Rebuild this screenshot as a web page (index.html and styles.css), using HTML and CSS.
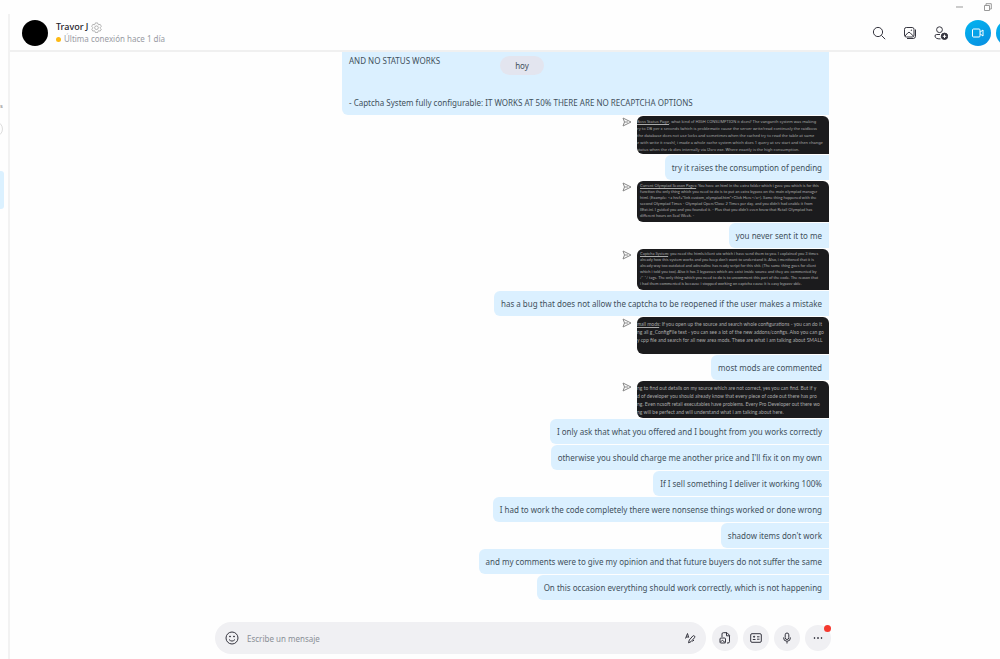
FILE: index.html
```html
<!DOCTYPE html>
<html lang="es">

<head>
    <title>Travor J</title>
    <meta charset="utf-8">
    <link rel="stylesheet" href="styles.css">
</head>

<body>
    <div class="window-bar">
        <button class="window-button" aria-label="Minimizar">
            <svg width="8" height="8" viewBox="0 0 8 8"><path d="M1 4h7" /></svg>
        </button>
        <button class="window-button" aria-label="Restaurar">
            <svg width="8" height="8" viewBox="0 0 8 8"><path d="M.5 2.500h5v5h-5zM2 2.500V.7h5.300V6H5.500" /></svg>
        </button>
    </div>

    <div class="app">
        <aside class="sidebar">
            <span class="sidebar-tab">s</span>
            <span class="sidebar-round"></span>
            <span class="sidebar-active"></span>
        </aside>

        <main class="chat">
            <header class="chat-header">
                <div class="avatar"></div>
                <div class="contact">
                    <div class="contact-name">Travor J
                        <svg width="11" height="11" viewBox="0 0 24 24"><path d="M9.500 2h5l.8 3 1.700 1 3-.9 2.500 4.300-2.200 2.200v1.800l2.200 2.200-2.500 4.300-3-.9-1.700 1-.8 3h-5l-.8-3-1.700-1-3 .9L1.500 15.600l2.200-2.200v-1.800L1.500 9.400 4 5.100l3 .9 1.700-1z" /><circle cx="12" cy="12.500" r="4" /></svg>
                    </div>
                    <div class="contact-status"><i class="dot"></i>Última conexión hace 1 día</div>
                </div>
                <nav class="actions">
                    <button class="action" aria-label="Buscar">
                        <svg width="14" height="14" viewBox="0 0 14 14"><circle cx="6" cy="6" r="4.600" /><path d="M9.400 9.400l3.800 3.800" /></svg>
                    </button>
                    <button class="action" aria-label="Galería">
                        <svg width="14" height="14" viewBox="0 0 14 14"><rect x="1.500" y="1.500" width="9.500" height="9.500" rx="1.800" /><path d="M2 10l3-3.300q1-.9 2 0l3.500 3.500M12.500 3.500v6.700q0 2.300-2.300 2.300H4" /><circle cx="8.300" cy="4.200" r=".3" /></svg>
                    </button>
                    <button class="action" aria-label="Agregar personas">
                        <svg width="14" height="14" viewBox="0 0 14 14"><circle cx="5.500" cy="3.700" r="2.900" /><path d="M6 8.500H2.700Q1 8.500 1 10q0 3 5.500 2.900" /><circle class="fill" cx="10.500" cy="10.300" r="3.200" /><path class="plus" d="M8.800 10.300h3.400M10.500 8.600V12" /></svg>
                    </button>
                    <button class="call" aria-label="Videollamada">
                        <svg width="14" height="14" viewBox="0 0 14 14"><rect x="1.500" y="3" width="7.500" height="8" rx="1" /><path d="M9 6.200l3-2.200v6L9 7.800" /></svg>
                    </button>
                    <button class="call" aria-label="Llamada"></button>
                </nav>
            </header>

            <section class="messages">
                <span class="day">hoy</span>
                <p class="bubble bubble-long">- Boss Status Page fully configurable: The page is not working with any options<br>AND NO STATUS WORKS<br><br><br>- Captcha System fully configurable: IT WORKS AT 50% THERE ARE NO RECAPTCHA OPTIONS</p>

                <div class="shot-row">
                    <button class="forward" aria-label="Reenviar"><svg width="10" height="10" viewBox="0 0 10 10"><path d="M1 1l8 4-8 4 1.500-4zM2.500 5H6" /></svg></button>
                    <div class="shot"><u>Boss Status Page</u>, what kind of HIGH CONSUMPTION it does? The vanganth system was making<br>ry to DB per x seconds (which is problematic cause the server write/read continusly the raidboss<br>the database does not use locks and sometimes when the cached try to read the table at same<br>e with write it crash), i made a whole cache system which does 1 query at srv start and then change<br>status when the rb dies internally via l2srv exe. Where exactly is the high consumption.</div>
                </div>
                <p class="bubble">try it raises the consumption of pending</p>

                <div class="shot-row">
                    <button class="forward" aria-label="Reenviar"><svg width="10" height="10" viewBox="0 0 10 10"><path d="M1 1l8 4-8 4 1.500-4zM2.500 5H6" /></svg></button>
                    <div class="shot shot-dense"><u>Current Olympiad Season Pages</u>: You have an html in the extra folder which i gave you which is for this<br>function the only thing which you need to do is to put an extra bypass on the main olympiad manager<br>html. (Example: &lt;a href="link custom_olympiad.htm"&gt;Click Here&lt;/a&gt;). Same thing happened with the<br>second Olympiad Times - Olympiad Open/Close 2 Times per day, and you didn't had enable it from<br>IlExt.ini. I guided you and you founded it. - Plus that you didn't even knew that Retail Olympiad has<br>different hours on Seal Week. -</div>
                </div>
                <p class="bubble">you never sent it to me</p>

                <div class="shot-row">
                    <button class="forward" aria-label="Reenviar"><svg width="10" height="10" viewBox="0 0 10 10"><path d="M1 1l8 4-8 4 1.500-4zM2.500 5H6" /></svg></button>
                    <div class="shot shot-dense"><u>Captcha System</u>: you need the htmls/client utx which i have send them to you. I explained you 3 times<br>already how this system works and you keep don't want to understand it. Also, i mentioned that it is<br>already way too outdated and adrenaline has ready script for this shit. (The same thing goes for client<br>which i told you too). Also it has 3 bypasses which are exist inside source and they are commented by<br>/* */ tags. The only thing which you need to do is to uncomment this part of the code. The reason that<br>i had them commented is because i stopped working on captcha cause it is easy bypass-able.</div>
                </div>
                <p class="bubble">has a bug that does not allow the captcha to be reopened if the user makes a mistake</p>

                <div class="shot-row">
                    <button class="forward" aria-label="Reenviar"><svg width="10" height="10" viewBox="0 0 10 10"><path d="M1 1l8 4-8 4 1.500-4zM2.500 5H6" /></svg></button>
                    <div class="shot shot-large"><u>mall mods</u>: If you open up the source and search whole configurations - you can do it<br>ng all g_ConfigFile text - you can see a lot of the new addons/configs. Also you can go<br>y cpp file and search for all new area mods. These are what i am talking about SMALL<br>&nbsp;</div>
                </div>
                <p class="bubble">most mods are commented</p>

                <div class="shot-row">
                    <button class="forward" aria-label="Reenviar"><svg width="10" height="10" viewBox="0 0 10 10"><path d="M1 1l8 4-8 4 1.500-4zM2.500 5H6" /></svg></button>
                    <div class="shot shot-large">ng to find out details on my source which are not correct, yes you can find. But if y<br>d of developer you should already know that every piece of code out there has pro<br>ng. Even ncsoft retail executables have problems. Every Pro Developer out there wo<br>ng will be perfect and will understand what i am talking about here.</div>
                </div>
                <p class="bubble">I only ask that what you offered and I bought from you works correctly</p>
                <p class="bubble">otherwise you should charge me another price and I'll fix it on my own</p>
                <p class="bubble">If I sell something I deliver it working 100%</p>
                <p class="bubble">I had to work the code completely there were nonsense things worked or done wrong</p>
                <p class="bubble">shadow items don't work</p>
                <p class="bubble">and my comments were to give my opinion and that future buyers do not suffer the same</p>
                <p class="bubble">On this occasion everything should work correctly, which is not happening</p>
            </section>

            <footer class="composer">
                <div class="input-box">
                    <button class="tool" aria-label="Emoticonos">
                        <svg width="14" height="14" viewBox="0 0 14 14"><circle cx="7" cy="7" r="6" /><path d="M4 8.500q3 3.200 6 0" /><circle class="fill" cx="5" cy="5.500" r=".5" /><circle class="fill" cx="9" cy="5.500" r=".5" /></svg>
                    </button>
                    <input class="message-input" type="text" placeholder="Escribe un mensaje" aria-label="Escribe un mensaje">
                    <button class="tool" aria-label="Formato">
                        <svg width="12" height="12" viewBox="0 0 12 12"><path d="M1.500 6.500l2-5 1.200 4M2 5h2.500M4.500 10.800l.8-2.800 3.500-4q1-.8 1.700 0t0 1.700l-3.500 4zM8.500 9.500l1.500-1.500" /></svg>
                    </button>
                </div>
                <button class="round" aria-label="Archivos">
                    <svg width="12" height="12" viewBox="0 0 12 12"><path d="M3 5V2q0-1.300 1.300-1.300H8L10.500 3.300v6.400Q10.500 11 9 11H8M7.500.8v3h3" /><rect x="1" y="6" width="5.500" height="5" rx="1" /><path d="M1.300 10.200l2-2 3 2.500" /></svg>
                </button>
                <button class="round" aria-label="Contactos">
                    <svg width="12" height="12" viewBox="0 0 12 12"><rect x=".7" y="1.700" width="10.600" height="8.600" rx="1.300" /><path d="M7 4.800h2.500M7 7.200h2.500M2.800 7.500h2.700" /><circle class="fill" cx="4.100" cy="4.700" r=".6" /></svg>
                </button>
                <button class="round" aria-label="Mensaje de voz">
                    <svg width="12" height="12" viewBox="0 0 12 12"><rect x="4.200" y="1" width="3.600" height="6.500" rx="1.800" /><path d="M2.500 5.500q0 3.800 3.500 3.800t3.500-3.800M6 9.300v2.200" /></svg>
                </button>
                <button class="round" aria-label="Más">
                    <svg width="12" height="12" viewBox="0 0 12 12"><circle class="fill" cx="2.500" cy="6" r=".5" /><circle class="fill" cx="6" cy="6" r=".5" /><circle class="fill" cx="9.500" cy="6" r=".5" /></svg>
                    <span class="badge"></span>
                </button>
            </footer>
        </main>
    </div>
</body>

</html>
```
FILE: styles.css
```css
* {
    box-sizing: border-box;
}

body {
    display: flex;
    flex-direction: column;
    height: 100vh;
    margin: 0;
    overflow: hidden;
    background-color: #fefefe;
    color: #42505c;
    font-family: "Noto Sans", "Open Sans", sans-serif;
    font-size: 8px;
}

button {
    display: flex;
    align-items: center;
    justify-content: center;
    flex: none;
    padding: 0;
    border: none;
    background: none;
    color: #35353f;
}

svg {
    display: block;
    fill: none;
    stroke: currentColor;
}

svg .fill {
    fill: currentColor;
}

svg .plus {
    stroke: white;
}

.window-bar {
    display: flex;
    justify-content: flex-end;
    gap: 21px;
    height: 14px;
    padding: 2px 8px 0 0;
}

.window-button {
    height: 10px;
    color: #999;
}

.app {
    display: flex;
    flex: 1;
    min-height: 0;
}

.sidebar {
    display: flex;
    flex-direction: column;
    width: 8px;
    overflow: hidden;
    color: #888;
}

.sidebar-tab {
    margin-top: 86px;
    line-height: 12px;
    font-size: 6px;
}

.sidebar-round {
    align-self: flex-end;
    width: 16px;
    height: 16px;
    margin: 9px 5px 0 0;
    border: 1px solid #ddd;
    border-radius: 8px;
}

.sidebar-active {
    height: 38px;
    margin: 34px 4px 0 0;
    border-radius: 0 3px 3px 0;
    background-color: #dbf1ff;
}

.chat {
    display: flex;
    flex-direction: column;
    flex: 1;
    min-width: 0;
    border-left: 2px solid #f2f2f2;
}

.chat-header {
    display: flex;
    align-items: center;
    height: 38px;
    padding: 2px 0 0 12px;
    border-bottom: 2px solid #f0f0f0;
}

.avatar {
    width: 26px;
    height: 26px;
    margin-right: 8px;
    border-radius: 50%;
    background-color: black;
}

.contact-name {
    display: flex;
    align-items: center;
    gap: 3px;
    line-height: 12px;
    color: #22222a;
    font-size: 9px;
    font-weight: 500;
}

.contact-name svg {
    color: #666;
}

.contact-status {
    display: flex;
    align-items: center;
    gap: 3px;
    line-height: 12px;
    color: #999ba3;
}

.dot {
    width: 5px;
    height: 5px;
    border-radius: 50%;
    background-color: #fdb913;
}

.actions {
    display: flex;
    align-items: center;
    gap: 17px;
    margin: 0 -22px 0 auto;
}

.call {
    width: 26px;
    height: 26px;
    border-radius: 50%;
    background: linear-gradient(150deg, #00b5f0, #0a8de0);
    color: white;
}

.call + .call {
    margin-left: -12px;
}

.messages {
    position: relative;
    display: flex;
    flex-direction: column;
    align-items: flex-end;
    justify-content: flex-end;
    gap: 1px;
    flex: 1;
    min-height: 0;
    padding: 0 171px 22px 205px;
    overflow: hidden;
}

.day {
    position: absolute;
    top: 4px;
    left: 205px;
    right: 171px;
    width: 44px;
    margin: 0 auto;
    border-radius: 10px;
    background-color: #e3e5ef;
    line-height: 19px;
    text-align: center;
}

.bubble {
    flex: none;
    margin: 0;
    padding: 0 7px;
    border-radius: 6px 0 0 6px;
    background-color: #dbf0ff;
    line-height: 25px;
}

.bubble-long {
    width: 487px;
    padding: 5px 7px;
    line-height: 14px;
}

.shot-row {
    display: flex;
    align-items: flex-start;
    flex: none;
    gap: 5px;
}

.forward {
    margin-top: 1px;
    color: #888;
}

.shot {
    width: 192px;
    padding: 2px 0 1px;
    overflow: hidden;
    border-radius: 6px 6px 0 6px;
    background-color: #1b1b1d;
    color: #aaa;
    font-size: 4px;
    line-height: 7px;
    white-space: nowrap;
}

.shot-dense {
    padding: 2px 3px 3px;
    font-family: Lato, sans-serif;
    line-height: 6px;
}

.shot-large {
    padding: 3px 0 2px;
    font-family: Lato, sans-serif;
    font-size: 5px;
    line-height: 8px;
}

.composer {
    display: flex;
    align-items: center;
    gap: 5px;
    padding: 0 169px 5px 205px;
}

.input-box {
    display: flex;
    align-items: center;
    flex: 1;
    gap: 8px;
    height: 32px;
    margin-right: 1px;
    padding: 0 10px;
    border-radius: 16px;
    background-color: #f0f0f3;
}

.message-input {
    flex: 1;
    min-width: 0;
    padding: 0;
    border: none;
    outline: none;
    background: none;
    font: inherit;
}

.message-input::placeholder {
    color: #8a8f96;
}

.round {
    position: relative;
    width: 26px;
    height: 26px;
    border-radius: 50%;
    background-color: #f0f0f3;
}

.badge {
    position: absolute;
    top: 0;
    right: 0;
    width: 7px;
    height: 7px;
    border-radius: 50%;
    background-color: #f5392f;
}
```
